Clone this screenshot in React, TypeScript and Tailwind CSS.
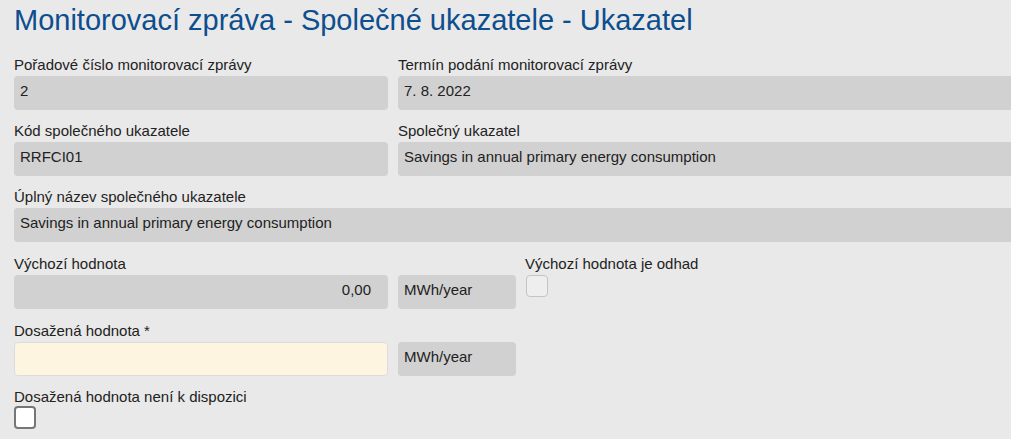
const FONT = "font-['Liberation_Sans',Arial,sans-serif]";

function Label({ children }: { children: React.ReactNode }) {
  return <div className="text-[15px] leading-[18px] mb-[2px] whitespace-nowrap">{children}</div>;
}

function ReadOnly({ value, right, className = "" }: { value: string; right?: boolean; className?: string }) {
  return (
    <div
      className={`h-[34px] rounded-[4px] bg-[#d1d1d1] px-[6px] pt-[6px] text-[15px] leading-[17px] whitespace-nowrap ${
        right ? "text-right pr-[17px]" : ""
      } ${className}`}
    >
      {value}
    </div>
  );
}

function Field({ label, value }: { label: string; value: string }) {
  return (
    <div>
      <Label>{label}</Label>
      <ReadOnly value={value} />
    </div>
  );
}

export default function App() {
  return (
    <div className={`min-h-screen w-full overflow-hidden bg-[#e9e9e9] text-[#222] ${FONT}`}>
      <div className="w-[1060px] pl-[14px]">
        <h1 className="pt-[3px] text-[29px] leading-[35px] text-[#0d4e8f] whitespace-nowrap">
          Monitorovací zpráva - Společné ukazatele - Ukazatel
        </h1>

        <div className="mt-[18px] grid grid-cols-[374px_1fr] gap-x-[10px] gap-y-[12px]">
          <Field label="Pořadové číslo monitorovací zprávy" value="2" />
          <Field label="Termín podání monitorovací zprávy" value="7. 8. 2022" />
          <Field label="Kód společného ukazatele" value="RRFCI01" />
          <Field label="Společný ukazatel" value="Savings in annual primary energy consumption" />
          <div className="col-span-2">
            <Field label="Úplný název společného ukazatele" value="Savings in annual primary energy consumption" />
          </div>
        </div>

        <div className="mt-[13px] flex gap-x-[10px]">
          <div className="w-[374px]">
            <Label>Výchozí hodnota</Label>
            <ReadOnly value="0,00" right />
          </div>
          <div className="w-[118px] pt-[20px]">
            <ReadOnly value="MWh/year" />
          </div>
          <div className="-ml-[1px]">
            <Label>Výchozí hodnota je odhad</Label>
            <div className="ml-[1px] h-[22px] w-[22px] rounded-[4px] border border-[#c4c4c4] bg-[#eeeeee]" />
          </div>
        </div>

        <div className="mt-[13px] flex gap-x-[10px]">
          <div className="w-[374px]">
            <Label>Dosažená hodnota *</Label>
            <input
              type="text"
              className="block h-[34px] w-full rounded-[4px] border border-[#dcdcdc] bg-[#fef5e0] px-[6px] text-[15px] outline-none"
            />
          </div>
          <div className="w-[118px] pt-[20px]">
            <ReadOnly value="MWh/year" />
          </div>
        </div>

        <div className="mt-[12px]">
          <div className="text-[15px] leading-[18px] whitespace-nowrap">Dosažená hodnota není k dispozici</div>
          <div className="h-[23px] w-[22px] rounded-[4px] border-2 border-[#767676] bg-white" />
        </div>
      </div>
    </div>
  );
}
